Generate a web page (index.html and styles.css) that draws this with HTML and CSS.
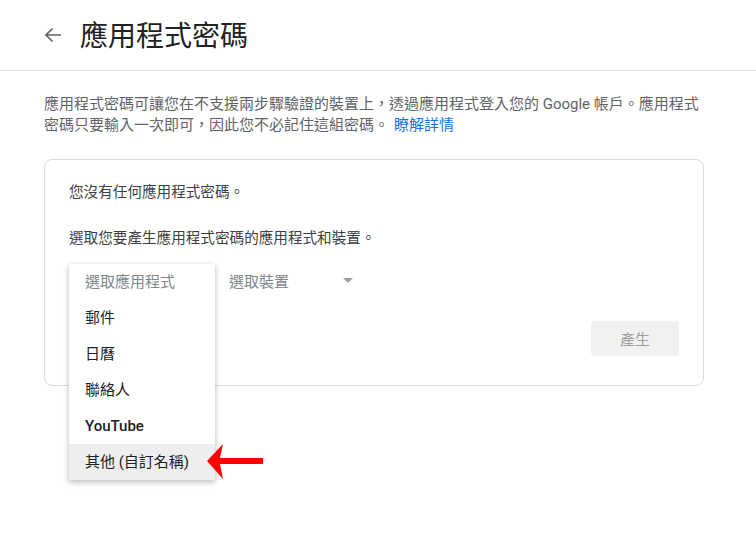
FILE: index.html
```html
<!DOCTYPE html>
<html>
<head>
  <meta charset="UTF-8" />
  <title>應用程式密碼</title>
  <link rel="stylesheet" href="styles.css">
</head>
<body>
<div class="header">
  <svg class="back" width="24" height="24" viewBox="0 0 24 24"><path d="M20 12H5M11.5 5.5L5 12l6.5 6.5" fill="none" stroke="#5f6368" stroke-width="1.7"/></svg>
  <h1 class="title">應用程式密碼</h1>
</div>
<div class="main">
  <p class="desc">應用程式密碼可讓您在不支援兩步驟驗證的裝置上，透過應用程式登入您的 Google 帳戶。應用程式密碼只要輸入一次即可，因此您不必記住這組密碼。<a class="link" href="#">瞭解詳情</a></p>
  <div class="card">
    <p class="line">您沒有任何應用程式密碼。</p>
    <p class="line second">選取您要產生應用程式密碼的應用程式和裝置。</p>
    <div class="selects">
      <div class="select app">
        <div class="menu">
          <div class="item placeholder">選取應用程式</div>
          <div class="item">郵件</div>
          <div class="item">日曆</div>
          <div class="item">聯絡人</div>
          <div class="item latin">YouTube</div>
          <div class="item active">其他 (自訂名稱)</div>
        </div>
        <svg class="pointer" width="60" height="40" viewBox="0 0 60 40"><polygon points="2,19 18,2 15,16 58,16 58,22 15,22 18,37" fill="#ff0000"/></svg>
      </div>
      <div class="select device">
        <span>選取裝置</span>
        <span class="caret"></span>
      </div>
    </div>
    <div class="actions">
      <button class="btn">產生</button>
    </div>
  </div>
</div>
</body>
</html>
```
FILE: styles.css
```css
html, body {
  min-height: 100%;
}
body {
  margin: 0;
  background: #fff;
  font-family: Roboto, "Noto Sans CJK TC", sans-serif;
  color: #202124;
}

.header {
  display: flex;
  align-items: center;
  height: 70px;
  border-bottom: 1px solid #e0e0e0;
  padding-left: 41px;
}
.back {
  margin-right: 15px;
}
.title {
  margin: 0;
  font-size: 28px;
  font-weight: 400;
  color: #202124;
  position: relative;
  top: -1px;
}

.main {
  width: 660px;
  padding: 0 44px 160px;
}

.desc {
  margin: 23px 0 0;
  font-size: 15px;
  line-height: 21px;
  color: #5f6368;
}
.link {
  display: inline-block;
  margin-left: 5px;
  color: #1a73e8;
  text-decoration: none;
}

.card {
  margin-top: 23px;
  border: 1px solid #dadce0;
  border-radius: 8px;
  padding: 22px 24px 29px;
}
.line {
  margin: 0;
  font-size: 14.6px;
  line-height: 20px;
  color: #3c4043;
}
.line.second {
  margin-top: 26px;
}

.selects {
  display: flex;
  margin-top: 16px;
  height: 36px;
}
.select {
  position: relative;
  display: flex;
  align-items: center;
  font-size: 15px;
  color: #80868b;
}
.select.app {
  width: 146px;
  margin-right: 14px;
}
.select.device {
  width: 126px;
  justify-content: space-between;
  padding-bottom: 4px;
  box-sizing: border-box;
}
.caret {
  width: 0;
  height: 0;
  border-left: 5px solid transparent;
  border-right: 5px solid transparent;
  border-top: 5px solid #9aa0a6;
  margin-right: 2px;
}

.menu {
  position: absolute;
  top: 0;
  left: 0;
  width: 146px;
  background: #fff;
  box-shadow: 0 2px 6px rgba(0, 0, 0, 0.28);
  z-index: 2;
}
.item {
  height: 36px;
  line-height: 36px;
  padding-left: 16px;
  font-size: 15px;
  color: #202124;
}
.item.placeholder {
  color: #80868b;
}
.item.latin {
  font-weight: 500;
}
.item.active {
  background: #eeeeee;
}
.pointer {
  position: absolute;
  left: 136px;
  top: 178px;
  z-index: 3;
}

.actions {
  display: flex;
  justify-content: flex-end;
  margin-top: 21px;
}
.btn {
  width: 88px;
  height: 35px;
  border: none;
  border-radius: 4px;
  background: #f1f1f1;
  color: #9e9e9e;
  font-family: Roboto, "Noto Sans CJK TC", sans-serif;
  font-size: 15px;
}
```
